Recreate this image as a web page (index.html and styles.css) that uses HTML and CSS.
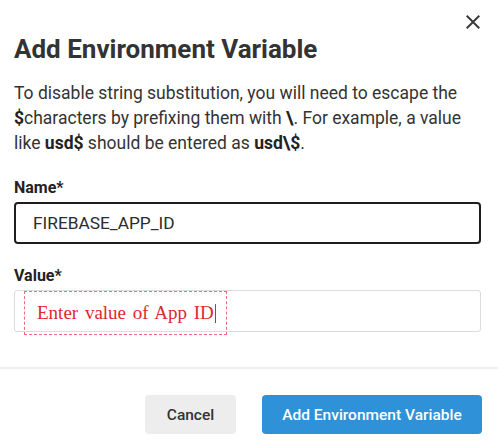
FILE: index.html
```html
<!DOCTYPE html>
<html lang="en">
<head>
<meta charset="utf-8">
<title>Add Environment Variable</title>
<link rel="stylesheet" href="styles.css">
</head>
<body>
<div class="dialog">
  <div class="content">
    <div class="topbar">
      <button class="close" aria-label="Close">
        <svg width="24" height="24" viewBox="0 0 24 24"><path d="M19 6.41L17.59 5 12 10.59 6.41 5 5 6.41 10.59 12 5 17.59 6.41 19 12 13.41 17.59 19 19 17.59 13.41 12z" fill="#3c3c3c"/></svg>
      </button>
    </div>
    <h1 class="title">Add Environment Variable</h1>
    <p class="desc">To disable string substitution, you will need to escape the <b>$</b>characters by prefixing them with <b>\</b>. For example, a value like <b>usd$</b> should be entered as <b>usd\$</b>.</p>
    <label class="label">Name*</label>
    <div class="field field-active">FIREBASE_APP_ID</div>
    <label class="label label-value">Value*</label>
    <div class="field field-value"><span class="annot">Enter value of App ID<span class="caret"></span></span></div>
  </div>
  <div class="footer">
    <button class="btn btn-cancel">Cancel</button>
    <button class="btn btn-primary">Add Environment Variable</button>
  </div>
</div>
</body>
</html>
```

FILE: styles.css
```css
html, body {
  margin: 0;
  padding: 0;
  background: #ffffff;
}
body {
  font-family: Roboto, "Liberation Sans", sans-serif;
  color: #333333;
}
.content {
  padding: 0 17px 0 14px;
}
.topbar {
  display: flex;
  justify-content: flex-end;
  padding-top: 10px;
  margin-right: -4px;
}
.close {
  width: 24px;
  height: 24px;
  padding: 0;
  border: 0;
  background: none;
  display: block;
}
.close svg {
  display: block;
}
.title {
  margin: 1px 0 0 0;
  font-size: 26px;
  line-height: 28px;
  font-weight: 700;
  color: #333333;
}
.desc {
  margin: 18px 0 0 0;
  font-size: 17.5px;
  line-height: 25px;
  color: #333333;
}
.desc b {
  font-weight: 700;
  color: #222222;
}
.label {
  display: block;
  margin-top: 22px;
  font-size: 16px;
  line-height: 20px;
  font-weight: 700;
  color: #222222;
}
.label-value {
  margin-top: 22px;
}
.field {
  box-sizing: border-box;
  height: 42px;
  margin-top: 4px;
  border-radius: 4px;
  display: flex;
  align-items: center;
}
.field-active {
  border: 2px solid #1e1e1e;
  padding-left: 17px;
  font-size: 17.3px;
  color: #2b2b2b;
}
.field-value {
  border: 1px solid #dcdcdc;
  border-radius: 3px;
  align-items: flex-start;
  padding-left: 9px;
}
.annot {
  box-sizing: border-box;
  height: 44px;
  display: flex;
  align-items: center;
  padding: 0 10px 0 12px;
  border: 1px dashed #f06a78;
  font-family: "Liberation Serif", serif;
  font-size: 19px;
  line-height: 42px;
  word-spacing: 2px;
  color: #dc2830;
}
.caret {
  display: inline-block;
  width: 1px;
  height: 19px;
  margin-left: 1px;
  background: #dc2830;
}
.footer {
  margin-top: 35px;
  border-top: 2px solid #eeeeee;
  padding: 26px 16px 10px 0;
  display: flex;
  justify-content: flex-end;
  gap: 26px;
}
.btn {
  height: 39px;
  border: 0;
  border-radius: 4px;
  font-family: Roboto, "Liberation Sans", sans-serif;
  font-size: 15.5px;
  font-weight: 500;
  padding: 0;
}
.btn-cancel {
  width: 91px;
  background: #ededed;
  color: #333333;
}
.btn-primary {
  width: 220px;
  background: #2f91d7;
  color: #ffffff;
}
```
